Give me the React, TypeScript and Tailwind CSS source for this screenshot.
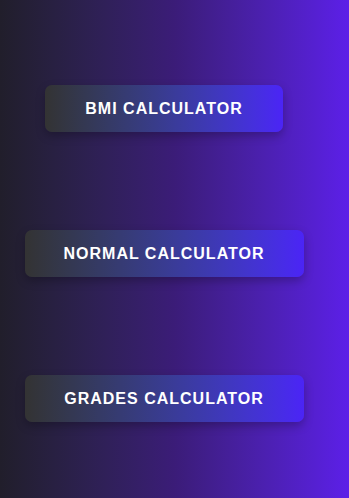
// 계산기 메뉴 화면
const ITEMS = [
  { label: "BMI CALCULATOR", width: "w-[238px]" },
  { label: "NORMAL CALCULATOR", width: "w-[279px]" },
  { label: "GRADES CALCULATOR", width: "w-[279px]" },
];

export default function App() {
  return (
    <div
      className="w-full min-h-[498px] bg-gradient-to-r from-[#211e2b] via-[#3b1c78] to-[#5c1fe8] flex flex-col items-center pt-[85px] gap-[98px] pr-[21px]"
      style={{ fontFamily: '"Liberation Sans", Arial, sans-serif' }}
    >
      {ITEMS.map((item) => (
        <button
          key={item.label}
          className={`${item.width} h-[47px] rounded-[7px] bg-gradient-to-r from-[#333333] to-[#4b24f6] text-white font-bold text-base tracking-[1px] shadow-[0_4px_10px_rgba(0,0,0,0.25)]`}
        >
          {item.label}
        </button>
      ))}
    </div>
  );
}
